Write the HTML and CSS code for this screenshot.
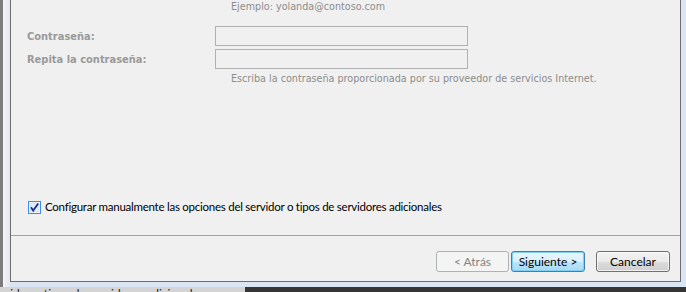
FILE: index.html
```html
<!DOCTYPE html>
<html lang="es">
<head>
  <meta charset="UTF-8" />
  <title>Agregar nueva cuenta</title>
  <link rel="stylesheet" href="styles.css">
</head>
<body>
  <div class="screen">
    <div class="frame">
      <div class="dialog">
        <div class="account">
          <p class="hint">Ejemplo: yolanda@contoso.com</p>
          <div class="fields">
            <div class="field">
              <label for="pw1">Contraseña:</label>
              <input id="pw1" class="input" type="password" disabled>
            </div>
            <div class="field">
              <label for="pw2">Repita la contraseña:</label>
              <input id="pw2" class="input" type="password" disabled>
            </div>
          </div>
          <p class="hint hint-bottom">Escriba la contraseña proporcionada por su proveedor de servicios Internet.</p>
        </div>

        <label class="manual">
          <span class="check">
            <svg width="13" height="13" viewBox="0 0 13 13">
              <rect x="0.5" y="0.5" width="12" height="12" fill="#fff" stroke="#3d8ee0"/>
              <rect x="2" y="2" width="9" height="9" fill="#e4eef9" stroke="#b9d3ee" stroke-width="0.6"/>
              <path d="M3 6.2 L5.2 9.6 L10.2 2.6" fill="none" stroke="#1c2f8a" stroke-width="1.8"/>
            </svg>
          </span>
          Configurar manualmente las opciones del servidor o tipos de servidores adicionales
        </label>

        <div class="separator"></div>

        <div class="buttons">
          <button class="btn btn-back" disabled>&lt; Atrás</button>
          <button class="btn btn-next">Siguiente &gt;</button>
          <button class="btn btn-cancel">Cancelar</button>
        </div>
      </div>
    </div>
    <div class="behind"><span>vidor o tipos de servidores adicionales</span></div>
  </div>
</body>
</html>
```

FILE: styles.css
```css
body {
  margin: 0;
  background: #353535;
  font-family: Lato, 'Noto Sans', sans-serif;
}

.screen {
  width: 686px;
  height: 292px;
  overflow: hidden;
}

/* window glass around the dialog */
.frame {
  box-sizing: border-box;
  height: 287px;
  padding: 0 5px 0 7px;
  border-left: 3px solid #7d7d7d;
  background: linear-gradient(90deg, #f4f6f8 0, #e3e7ec 7px, #d9e5f3 8px, #dbe6f4 100%);
}

.dialog {
  box-sizing: border-box;
  height: 282px;
  border: 1px solid #6e6e6e;
  border-top: none;
  background: #f0f0f0;
}

/* account section (disabled) */
.account {
  font-family: 'DejaVu Sans', sans-serif;
  font-stretch: condensed;
  font-size: 11px;
}
.hint {
  margin: 0 0 0 220px;
  font-size: 10.7px;
  line-height: 14px;
  color: #8d8d8d;
}
.hint-bottom {
  margin-top: 3px;
}
.fields {
  display: flex;
  flex-direction: column;
  gap: 3px;
  margin: 12px 0 0 16px;
}
.field {
  display: flex;
  align-items: center;
  height: 20px;
}
.field label {
  width: 188px;
  font-weight: bold;
  color: #9a9a9a;
}
.input {
  box-sizing: border-box;
  width: 253px;
  height: 20px;
  margin: 0;
  padding: 0;
  border: 1px solid #b1b1b1;
  background: #f0f0f0;
}

.manual {
  display: flex;
  align-items: center;
  gap: 4px;
  height: 16px;
  margin: 113px 0 0 17px;
  font-size: 11.5px;
  letter-spacing: -0.25px;
  line-height: 16px;
  color: #000;
}
.check {
  display: flex;
  width: 13px;
  height: 13px;
}

.separator {
  height: 1px;
  margin-top: 20px;
  background: #a0a0a0;
}

.buttons {
  display: flex;
  justify-content: flex-end;
  margin: 15px 10px 0 0;
}
.btn {
  box-sizing: border-box;
  width: 74px;
  height: 21px;
  padding: 0;
  border: 1px solid #707070;
  border-radius: 3px;
  font-family: inherit;
  font-size: 12px;
  color: #000;
  background: linear-gradient(#f2f2f2 0, #ebebeb 50%, #dddddd 51%, #cfcfcf 100%);
  box-shadow: inset 0 0 0 1px rgba(255, 255, 255, 0.7);
}
.btn-back {
  width: 73px;
  margin-right: 2px;
  border-color: #adb2b5;
  background: #f4f4f4;
  color: #838383;
  box-shadow: none;
}
.btn-next {
  margin-right: 11px;
  border-color: #3c7fb1;
  background: linear-gradient(#eaf6fd 0, #d9f0fc 50%, #bee6fd 51%, #a7d9f5 100%);
  box-shadow: inset 0 0 0 1px #7fd0f7;
}

/* other window peeking below */
.behind {
  height: 5px;
  overflow: hidden;
  background: linear-gradient(90deg, #d4d4d4 0, #d4d4d4 245px, #353535 245px);
}
.behind span {
  display: block;
  margin: 1px 0 0 4px;
  font-size: 12px;
  line-height: 12px;
  color: #222;
}
```
